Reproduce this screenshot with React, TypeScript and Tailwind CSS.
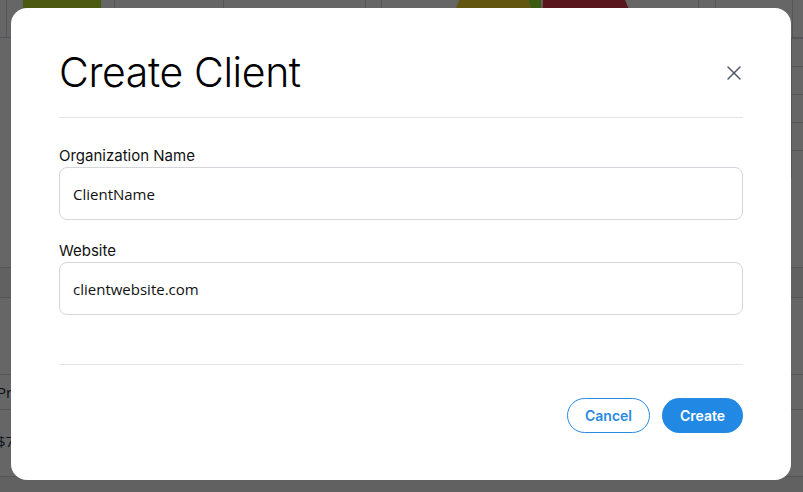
import { X } from "lucide-react";

function Background() {
  return (
    <div className="h-[492px] w-[803px] overflow-hidden bg-white font-['Open_Sans',sans-serif] text-gray-800">
      {/* top row of dashboard cards */}
      <div className="flex h-[38px] border-b border-gray-300">
        <div className="w-[7px] border-r border-gray-300" />
        <div className="w-[16px]" />
        <div className="w-[78px] bg-[#bbe228]" />
        <div className="w-[14px] border-r border-gray-300" />
        <div className="w-[109px] border-r border-gray-300" />
        <div className="w-[142px] border-r border-gray-300" />
        <div className="w-[16px] border-r border-gray-300" />
        <div className="relative w-[317px] border-r border-gray-300">
          <svg className="absolute left-[60px] top-[-60px]" width="200" height="200" viewBox="0 0 200 200">
            <path d="M100 100 L14 68 A92 92 0 0 1 70 13 Z" fill="#f5d429" />
            <path d="M100 100 L70 13 A92 92 0 0 1 98 8 Z" fill="#96e128" />
            <path d="M100 100 L102 8 A92 92 0 0 1 190 80 Z" fill="#e1374a" />
          </svg>
        </div>
        <div className="w-[17px] border-r border-gray-300" />
        <div className="w-[77px] border-r border-gray-300" />
        <div className="flex-1" />
      </div>
      {/* table on the right */}
      <div className="flex">
        <div className="flex-1" />
        <div className="w-[12px] border-l border-gray-300">
          {[0, 1, 2, 3, 4].map((i) => (
            <div key={i} className="h-[28px] border-t border-gray-300" />
          ))}
        </div>
      </div>
      <div className="mt-[-140px] h-[229px]" />
      <div className="flex flex-col">
        <div className="h-[31px] border-y border-gray-300 bg-[#f2f2f2]" />
        <div className="h-[76px]" />
        <div className="flex h-[36px] items-center border-y border-gray-300 text-[15px]">
          <span className="ml-[-3px]">Previous</span>
        </div>
        <div className="flex h-[66px] items-center pb-[4px] text-[15px] text-[#1f3b5a]">
          <span className="ml-[-3px]">$7</span>
        </div>
        <div className="h-[20px] border-t border-gray-300 bg-[#f2f2f2]" />
      </div>
    </div>
  );
}

function Field({ label, value }: { label: string; value: string }) {
  return (
    <div className="flex flex-col">
      <label className="mb-[1px] text-[15px] leading-[20px] text-[#111]">{label}</label>
      <input
        readOnly
        value={value}
        className="h-[53px] rounded-[8px] border border-[#d4d6dc] px-[13px] font-['Open_Sans',sans-serif] text-[15px] text-[#111] outline-none"
      />
    </div>
  );
}

export default function App() {
  return (
    <div className="relative h-[492px] w-[803px] overflow-hidden">
      <Background />
      <div className="fixed inset-0 bg-black/60" />
      <div className="fixed left-[11px] top-[8px] flex h-[472px] w-[780px] flex-col rounded-[16px] bg-white px-12 font-['Inter',sans-serif]">
        <div className="flex h-[110px] items-center justify-between border-b border-[#e3e4e8] pt-[20px]">
          <h1 className="text-[41px] font-light leading-none tracking-[-0.4px] text-black">Create Client</h1>
          <X className="mr-[-3px] h-[24px] w-[24px] text-[#4b5563]" strokeWidth={1.4} />
        </div>
        <div className="flex flex-col gap-[21px] pt-[28px]">
          <Field label="Organization Name" value="ClientName" />
          <Field label="Website" value="clientwebsite.com" />
        </div>
        <div className="mt-[49px] border-t border-[#e3e4e8]" />
        <div className="flex justify-end gap-[12px] pt-[33px]">
          <button className="h-[35px] w-[83px] rounded-full border border-[#2a8ae0] text-[14px] font-semibold text-[#2a8ae0]">
            Cancel
          </button>
          <button className="h-[35px] w-[81px] rounded-full bg-[#2189e3] text-[14px] font-semibold text-white">
            Create
          </button>
        </div>
      </div>
    </div>
  );
}
